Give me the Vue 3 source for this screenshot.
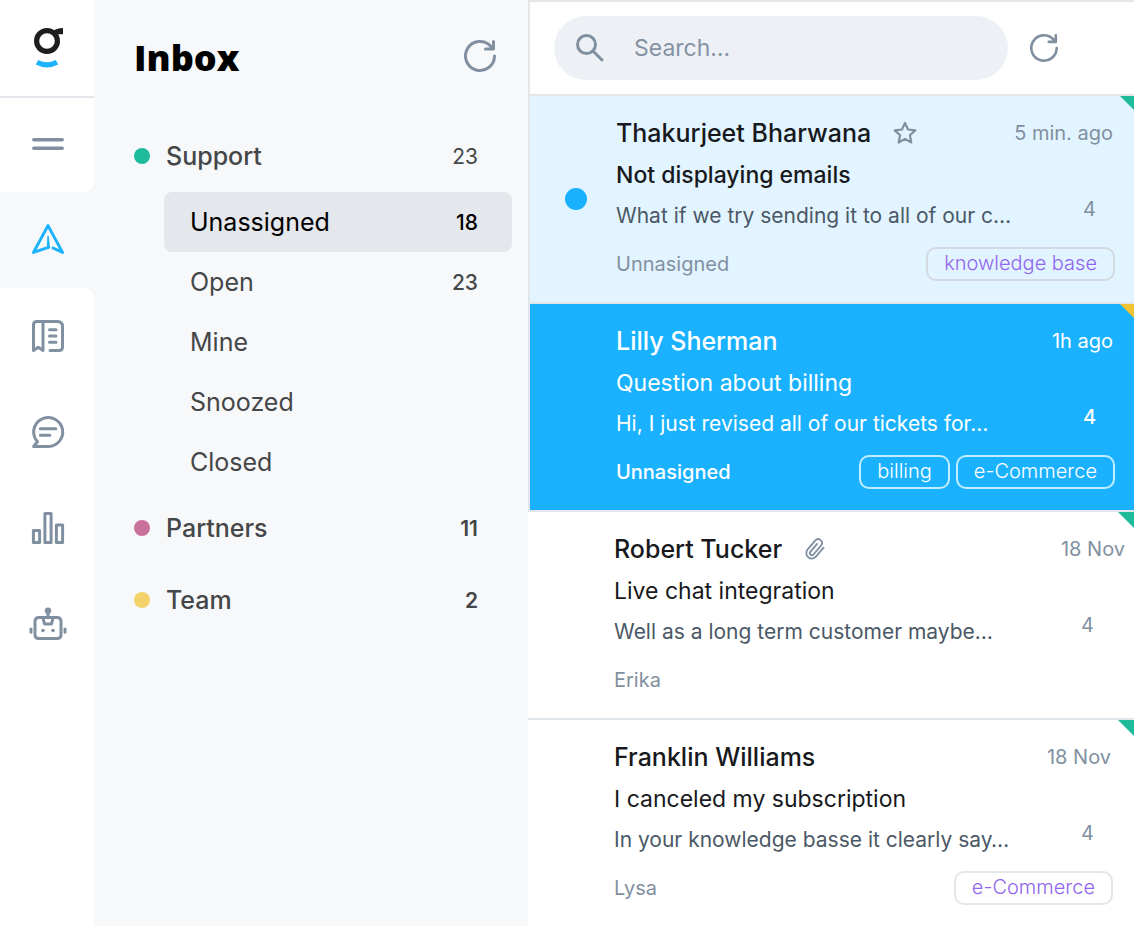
<script setup>
const sections = [
  { label: 'Inbox' },
  { label: 'Knowledge base' },
  { label: 'Chat' },
  { label: 'Reports' },
  { label: 'Bots' }
]

const groups = [
  {
    name: 'Support',
    count: '23',
    tone: 'teal',
    light: true,
    folders: [
      { name: 'Unassigned', count: '18', active: true },
      { name: 'Open', count: '23' },
      { name: 'Mine' },
      { name: 'Snoozed' },
      { name: 'Closed' }
    ]
  },
  { name: 'Partners', count: '11', tone: 'pink', folders: [] },
  { name: 'Team', count: '2', tone: 'yellow', folders: [] }
]

const tickets = [
  {
    sender: 'Thakurjeet Bharwana', subject: 'Not displaying emails',
    snippet: 'What if we try sending it to all of our c…', time: '5 min. ago',
    count: 4, owner: 'Unnasigned', tags: ['knowledge base'],
    state: 'unread', starred: true, corner: 'teal'
  },
  {
    sender: 'Lilly Sherman', subject: 'Question about billing',
    snippet: 'Hi, I just revised all of our tickets for…', time: '1h ago',
    count: 4, owner: 'Unnasigned', tags: ['billing', 'e-Commerce'],
    state: 'selected', corner: 'yellow'
  },
  {
    sender: 'Robert Tucker', subject: 'Live chat integration',
    snippet: 'Well as a long term customer maybe…', time: '18 Nov',
    count: 4, owner: 'Erika', tags: [],
    state: 'read wide', attachment: true, corner: 'teal'
  },
  {
    sender: 'Franklin Williams', subject: 'I canceled my subscription',
    snippet: 'In your knowledge basse it clearly say…', time: '18 Nov',
    count: 4, owner: 'Lysa', tags: ['e-Commerce'],
    state: 'read', corner: 'teal'
  }
]
</script>

<template>
  <div class="app">
    <nav class="rail" aria-label="Main">
      <a class="brand" href="#" aria-label="Home">
        <svg width="34" height="44" viewBox="0 0 34 44">
          <circle cx="17" cy="15" r="10.4" fill="none" stroke="#1d1e1e" stroke-width="5.2" />
          <path d="M22.500 5.500Q26 2 33 2v6.200h-6z" fill="#1d1e1e" />
          <path d="M7 36.300Q17 41.500 27 36.300" fill="none" stroke="#1cb2fc" stroke-width="5.200" />
        </svg>
      </a>
      <button class="rail-item menu" aria-label="Menu">
        <svg width="40" height="40" viewBox="0 0 40 40">
          <path d="M5.800 14.700h28.400M5.800 23.300h28.400" />
        </svg>
      </button>
      <a
        v-for="(section, i) in sections"
        :key="section.label"
        class="rail-item"
        :class="{ current: i === 0, after: i === 1 }"
        href="#"
        :aria-label="section.label"
      >
        <svg width="40" height="40" viewBox="0 0 40 40">
          <g v-if="i === 0">
            <path d="M20.500 27.300 5.500 32.400 20 5.600l14.500 26.800L25 28" />
            <path d="M19.300 16h1.400l1.500 12-3.400 1z" class="solid" />
          </g>
          <g v-else-if="i === 1">
            <path d="M15 34.500V5.500H9Q5.500 5.500 5.500 9v25.500l4.700-3.200zM15 5.500h14.500q5 0 5 5V31q0 3.500-3.500 3.500h-9M21.500 13.700H28M21.500 20H28M21.500 26.200H28" />
          </g>
          <g v-else-if="i === 2">
            <path d="M5.600 34.500H20.500A14.500 14.500 0 1 0 7.500 27q1 1.600 2 2.600-1.600 2.200-3.900 4.900zM12.300 16.700h15.500M12.300 23.200h9.500" />
          </g>
          <g v-else-if="i === 3">
            <path d="M5.400 22.500h6.200v12.100H5.400zM16.900 5.400h6.200v29.200h-6.200zM28.400 16.900h6.200v17.700h-6.200z" />
          </g>
          <g v-else>
            <path d="M11 13.500h18q4 0 4 4v13q0 4-4 4H11q-4 0-4-4v-13q0-4 4-4zM20 8v5M15 14l1.500 6h7l1.500-6M3 25v3.200M37 25v3.200" />
            <circle class="solid" cx="20" cy="6.800" r="3.200" />
            <circle class="solid" cx="15" cy="26.500" r="1.800" />
            <circle class="solid" cx="25" cy="26.500" r="1.800" />
          </g>
        </svg>
      </a>
    </nav>

    <aside class="sidebar">
      <header class="sidebar-head">
        <h1>Inbox</h1>
        <button class="icon-button" aria-label="Refresh inbox">
          <svg width="32" height="32" viewBox="0 0 32 32">
            <path d="M30.500 16A14.500 14.500 0 1 1 26.500 6L29 9M29.500 1.500V9H21.500" />
          </svg>
        </button>
      </header>
      <section v-for="group in groups" :key="group.name">
        <a class="group" :class="{ light: group.light }" href="#">
          <span class="dot" :class="group.tone"></span>
          <span class="label">{{ group.name }}</span>
          <span class="total">{{ group.count }}</span>
        </a>
        <a
          v-for="folder in group.folders"
          :key="folder.name"
          class="folder"
          :class="{ active: folder.active }"
          href="#"
        >
          <span class="label">{{ folder.name }}</span>
          <span v-if="folder.count" class="total">{{ folder.count }}</span>
        </a>
      </section>
    </aside>

    <main class="list">
      <header class="toolbar">
        <label class="search">
          <svg width="28" height="28" viewBox="0 0 28 28">
            <circle cx="10.500" cy="10.500" r="9" />
            <path d="m17.500 17.500 8.500 8.500" />
          </svg>
          <input type="text" placeholder="Search…" aria-label="Search" />
        </label>
        <button class="icon-button" aria-label="Refresh list">
          <svg width="28" height="28" viewBox="0 0 32 32">
            <path d="M30.500 16A14.500 14.500 0 1 1 26.500 6L29 9M29.500 1.500V9H21.500" />
          </svg>
        </button>
      </header>

      <article v-for="ticket in tickets" :key="ticket.sender" class="ticket" :class="ticket.state">
        <span class="corner" :class="ticket.corner"></span>
        <div class="gutter"><span v-if="ticket.state === 'unread'" class="unread-dot"></span></div>
        <div class="body">
          <div class="line">
            <h2>{{ ticket.sender }}</h2>
            <svg v-if="ticket.starred" class="mark" width="24" height="24" viewBox="0 0 22 22">
              <path d="m11 1.800 2.800 6 6.600.8-4.900 4.500 1.300 6.600L11 16.400l-5.800 3.300 1.300-6.600L1.600 8.600l6.600-.8z" />
            </svg>
            <svg v-if="ticket.attachment" class="mark" width="22" height="22" viewBox="0 0 24 24">
              <path d="M21.400 10.500l-8.400 9.900a6 6 0 0 1-9.200-7.700l8.600-10.100a4.200 4.200 0 0 1 6.400 5.400l-8.500 10a2.200 2.200 0 0 1-3.400-2.800l7.400-8.700" />
            </svg>
            <time>{{ ticket.time }}</time>
          </div>
          <p class="subject">{{ ticket.subject }}</p>
          <div class="line preview">
            <p class="snippet">{{ ticket.snippet }}</p>
            <span class="replies">{{ ticket.count }}</span>
          </div>
          <footer>
            <span class="owner">{{ ticket.owner }}</span>
            <a v-for="tag in ticket.tags" :key="tag" class="tag" href="#">{{ tag }}</a>
          </footer>
        </div>
      </article>
    </main>
  </div>
</template>

<style>
body {
  background: #fff;
}
</style>

<style scoped>
.app {
  display: grid;
  grid-template-columns: 94px 434px minmax(0, 1fr);
  min-height: 100vh;
  background: #f7f8fa;
  font-family: Inter, "Liberation Sans", sans-serif;
  color: #17191c;
}
h1,
h2,
p {
  margin: 0;
}
a {
  color: inherit;
  text-decoration: none;
}
button {
  padding: 0;
  border: 0;
  background: none;
}
svg {
  display: block;
  flex: none;
  overflow: visible;
  fill: none;
  stroke: #8090a0;
  stroke-width: 3;
  stroke-linecap: round;
  stroke-linejoin: round;
}
.teal { background: #1dba9c; }
.pink { background: #c9709b; }
.yellow { background: #f2d269; }

/* Rail */
.rail {
  display: flex;
  flex-direction: column;
}
.rail::after {
  content: "";
  flex: 1;
  background: #fff;
}
.brand {
  height: 96px;
  display: flex;
  align-items: center;
  justify-content: center;
  background: #fff;
  border-bottom: 2px solid #e3e7ec;
}
.brand svg {
  stroke-linecap: butt;
  stroke-width: 0;
}
.rail-item {
  height: 96px;
  display: flex;
  align-items: center;
  justify-content: center;
  padding-left: 2px;
  background: #fff;
}
.menu {
  height: 94px;
  border-radius: 0 0 10px 0;
}
.menu svg {
  stroke-width: 3.5;
}
.rail-item.current {
  background: none;
}
.rail-item.after {
  border-radius: 0 10px 0 0;
}
.current svg {
  stroke: #1cb2fc;
}
.solid {
  fill: #8090a0;
  stroke: none;
}
.current .solid {
  fill: #1cb2fc;
}

/* Folders */
.sidebar {
  padding: 0 16px 0 40px;
}
.sidebar-head {
  display: flex;
  align-items: center;
  justify-content: space-between;
  height: 112px;
  margin-bottom: 8px;
  padding-right: 16px;
}
h1 {
  padding-top: 4px;
  font: 800 36px/44px "Open Sans", sans-serif;
  color: #000;
}
.group,
.folder {
  display: flex;
  align-items: center;
  padding-right: 34px;
  color: #444648;
  font-size: 25px;
}
.group {
  height: 72px;
  font-weight: 500;
}
.folder {
  height: 60px;
  margin-left: 30px;
  padding-left: 26px;
  border-radius: 8px;
}
.folder.active {
  background: #e4e7ec;
  color: #000;
}
.dot {
  width: 16px;
  height: 16px;
  margin-right: 16px;
  border-radius: 50%;
}
.label {
  flex: 1;
}
.total {
  font-size: 21px;
  font-weight: 500;
}
.group .total {
  font-weight: 600;
}
.light .total {
  font-weight: 400;
}

/* Tickets */
.list {
  overflow: hidden;
  background: #fff;
}
.toolbar {
  display: flex;
  align-items: center;
  gap: 22px;
  padding: 14px 76px 14px 24px;
  border: 2px solid #e3e7ea;
  border-right: 0;
}
.search {
  flex: 1;
  min-width: 0;
  display: flex;
  align-items: center;
  gap: 30px;
  height: 64px;
  padding: 0 22px;
  border-radius: 32px;
  background: #edf0f5;
}
input {
  flex: 1;
  min-width: 0;
  padding: 0;
  border: 0;
  outline: 0;
  background: none;
  color: #17191c;
  font: 400 23px/32px Inter, sans-serif;
}
input::placeholder {
  color: #8492a1;
  opacity: 1;
}
.ticket {
  position: relative;
  display: grid;
  grid-template-columns: 86px minmax(0, 1fr);
  align-items: center;
  width: 100%;
  border-bottom: 2px solid #e0e6ea;
}
.ticket:last-child {
  border-bottom: 0;
}
.unread,
.selected {
  border-left: 2px solid #e0e6ea;
}
.unread {
  background: #e2f4ff;
}
.selected {
  background: #1ab2ff;
}
.corner {
  position: absolute;
  top: 0;
  right: 0;
  width: 16px;
  height: 16px;
  clip-path: polygon(0 0, 100% 0, 100% 100%);
}
.corner.yellow {
  background: #f1c232;
}
.gutter {
  padding-left: 35px;
}
.unread-dot {
  display: block;
  width: 22px;
  height: 22px;
  border-radius: 50%;
  background: #1ab2ff;
}
.body {
  padding: 16px 21px 21px 0;
  white-space: nowrap;
}
.line {
  display: flex;
  align-items: center;
  height: 42px;
  padding-right: 2px;
}
.wide .line:first-child {
  margin-right: -14px;
}
.line.preview {
  align-items: flex-start;
  height: 40px;
  padding-right: 19px;
}
h2 {
  font-size: 25px;
  line-height: 42px;
  font-weight: 500;
}
.mark {
  margin-left: 22px;
  stroke-width: 2;
}
time {
  margin-left: auto;
  font-size: 20px;
  color: #8190a0;
}
.subject {
  font-size: 23px;
  line-height: 42px;
}
.unread .subject {
  font-weight: 500;
}
.snippet {
  flex: 1;
  overflow: hidden;
  font-size: 21px;
  line-height: 40px;
  color: #4b5866;
}
.replies {
  font-size: 20px;
  line-height: 26px;
  color: #8190a0;
}
footer {
  display: flex;
  align-items: center;
  gap: 6px;
  height: 34px;
  margin-top: 11px;
}
.owner {
  flex: 1;
  font-size: 20px;
  color: #8190a0;
}
.tag {
  box-sizing: border-box;
  height: 34px;
  padding: 0 16px;
  border: 2px solid #d3dae2;
  border-radius: 10px;
  color: #9066ee;
  font-size: 20px;
  font-weight: 300;
  line-height: 28px;
}
.read .tag {
  border-color: #e3e7ea;
}
.selected h2,
.selected time,
.selected p,
.selected span:not(.corner),
.selected .tag {
  color: #fff;
}
.selected .tag {
  border-color: #c2ecff;
}
.selected .owner,
.selected .replies {
  font-weight: 500;
}
</style>
